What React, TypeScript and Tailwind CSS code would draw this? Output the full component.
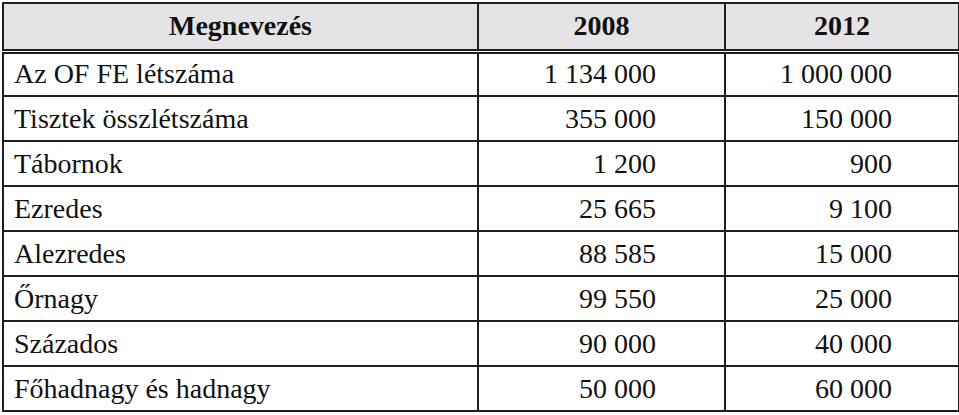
const rows: [string, string, string][] = [
  ['Az OF FE létszáma', '1 134 000', '1 000 000'],
  ['Tisztek összlétszáma', '355 000', '150 000'],
  ['Tábornok', '1 200', '900'],
  ['Ezredes', '25 665', '9 100'],
  ['Alezredes', '88 585', '15 000'],
  ['Őrnagy', '99 550', '25 000'],
  ['Százados', '90 000', '40 000'],
  ['Főhadnagy és hadnagy', '50 000', '60 000'],
];

export default function App() {
  return (
    <div className="w-[959px] h-[415px] bg-white pt-[2px] pl-[2px] font-['Liberation_Serif'] text-[#111]">
      <table className="table-fixed border-collapse w-[956px] border-2 border-[#1f1f1f] text-[28px] leading-none">
        <colgroup>
          <col className="w-[475px]" />
          <col className="w-[247px]" />
          <col className="w-[234px]" />
        </colgroup>
        <thead>
          <tr className="h-[48px] bg-[#e4e4e4] border-b-[5px] border-double border-[#1f1f1f]">
            <th className="font-bold text-center border-r-2 border-[#1f1f1f]">Megnevezés</th>
            <th className="font-bold text-center border-r-2 border-[#1f1f1f]">2008</th>
            <th className="font-bold text-center">2012</th>
          </tr>
        </thead>
        <tbody>
          {rows.map(([name, a, b]) => (
            <tr key={name} className="h-[45px] border-t-2 border-[#1f1f1f] first:border-t-0">
              <td className="pl-[10px] text-left border-r-2 border-[#1f1f1f]">{name}</td>
              <td className="pr-[68px] text-right border-r-2 border-[#1f1f1f]">{a}</td>
              <td className="pr-[66px] text-right">{b}</td>
            </tr>
          ))}
        </tbody>
      </table>
    </div>
  );
}
